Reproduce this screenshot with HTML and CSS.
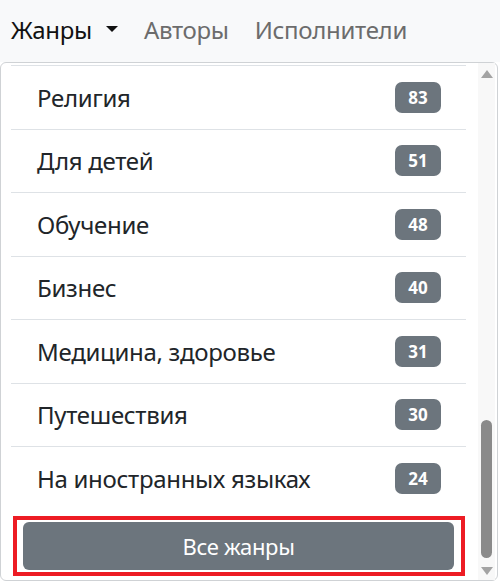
FILE: index.html
```html
<!DOCTYPE html>
<html lang="ru">
<head>
<meta charset="utf-8">
<title>Жанры</title>
<link rel="stylesheet" href="styles.css">
</head>
<body>
<nav class="navbar">
  <a class="nav-link active">Жанры<span class="caret"></span></a>
  <a class="nav-link">Авторы</a>
  <a class="nav-link">Исполнители</a>
</nav>
<div class="dropdown">
  <div class="list">
    <div class="item"><span>Религия</span><span class="badge">83</span></div>
    <div class="item"><span>Для детей</span><span class="badge">51</span></div>
    <div class="item"><span>Обучение</span><span class="badge">48</span></div>
    <div class="item"><span>Бизнес</span><span class="badge">40</span></div>
    <div class="item"><span>Медицина, здоровье</span><span class="badge">31</span></div>
    <div class="item"><span>Путешествия</span><span class="badge">30</span></div>
    <div class="item"><span>На иностранных языках</span><span class="badge">24</span></div>
    <div class="highlight"><button class="btn">Все жанры</button></div>
  </div>
  <div class="scrollbar">
    <span class="arrow-up"></span>
    <span class="thumb"></span>
    <span class="arrow-down"></span>
  </div>
</div>
</body>
</html>
```
FILE: styles.css
```css
* { box-sizing: border-box; }
html, body { margin: 0; padding: 0; }
body {
  font-family: "Noto Sans", "Open Sans", sans-serif;
  background: #ffffff;
  width: 500px;
  height: 583px;
  overflow: hidden;
}
.navbar {
  background: #f8f9fa;
  height: 62px;
  display: flex;
  align-items: center;
  padding: 0 0 4px 11px;
  gap: 26px;
}
.nav-link {
  font-size: 24px;
  color: #6c6c6c;
  display: flex;
  align-items: center;
  letter-spacing: -0.3px;
}
.nav-link.active { color: #111111; }
.caret {
  display: inline-block;
  margin-left: 14px;
  width: 0;
  height: 0;
  border-left: 6px solid transparent;
  border-right: 6px solid transparent;
  border-top: 6px solid #111111;
}
.dropdown {
  height: 519px;
  width: 498px;
  border: 1px solid #cfd2d5;
  border-radius: 6px;
  background: #ffffff;
  display: flex;
}
.list {
  flex: 1;
  padding: 2px 12px 4px 10px;
}
.item {
  height: 63.5px;
  border-top: 1px solid #dee2e6;
  display: flex;
  align-items: center;
  justify-content: space-between;
  padding: 0 25px 0 26px;
  font-size: 24px;
  color: #212529;
  letter-spacing: -0.3px;
}
.badge {
  width: 46px;
  height: 31px;
  border-radius: 7px;
  background: #6c757d;
  color: #ffffff;
  font-weight: 700;
  font-size: 17px;
  letter-spacing: 0;
  display: flex;
  align-items: center;
  justify-content: center;
}
.highlight {
  margin: 6.5px 1px 0 2px;
  height: 60px;
  border: 4px solid #ed1c24;
  padding: 2px 7px 2px 6px;
}
.btn {
  width: 100%;
  height: 48px;
  border: none;
  border-radius: 6px;
  background: #6c757d;
  color: #ffffff;
  font-family: "Noto Sans", "Open Sans", sans-serif;
  font-size: 22px;
  letter-spacing: -0.3px;
  padding: 0;
}
.scrollbar {
  width: 17px;
  margin-right: 2px;
  background: #f8f8f8;
  display: flex;
  flex-direction: column;
  align-items: center;
  padding: 7px 0 5px;
}
.arrow-up, .arrow-down {
  width: 0;
  height: 0;
  border-left: 6.5px solid transparent;
  border-right: 6.5px solid transparent;
}
.arrow-up { border-bottom: 8px solid #a3a3a3; }
.arrow-down { border-top: 8px solid #a3a3a3; }
.thumb {
  margin-top: auto;
  margin-bottom: 9px;
  width: 11px;
  height: 138px;
  border-radius: 6px;
  background: #8a8a8a;
}
```
